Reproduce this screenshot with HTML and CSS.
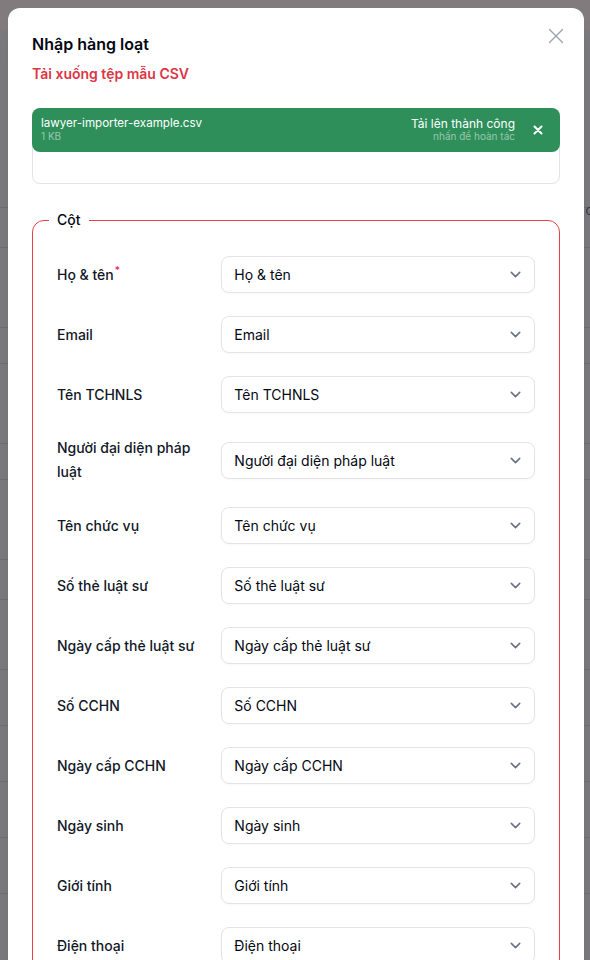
FILE: index.html
```html
<!DOCTYPE html>
<html lang="vi">
<head>
<meta charset="utf-8">
<title>Nhập hàng loạt</title>
<link rel="stylesheet" href="styles.css">
</head>
<body>
<div class="page">
  <div class="page-top"></div>
  <div class="bg-row h178"><span class="bg-text">c</span></div>
  <div class="bg-row h40"></div>
  <div class="bg-row h80"></div>
  <div class="bg-row h36"></div>
  <div class="bg-row h80"></div>
  <div class="bg-row h36"></div>
  <div class="bg-row h80"></div>
  <div class="bg-row h40"></div>
  <div class="bg-row h70"></div>
  <div class="bg-row h56"></div>
  <div class="bg-row h56"></div>
  <div class="bg-row h56"></div>
  <div class="bg-row h56"></div>
</div>

<div class="overlay">
  <div class="modal">
    <button class="close" type="button" aria-label="Đóng">
      <svg width="16" height="16" viewBox="0 0 16 16" fill="none" stroke="#9ca3af" stroke-width="1.4" stroke-linecap="round"><path d="M1.5 1.5l13 13M14.5 1.5l-13 13"/></svg>
    </button>
    <h2 class="title">Nhập hàng loạt</h2>
    <a class="download" href="#">Tải xuống tệp mẫu CSV</a>

    <div class="upload">
      <div class="file-item">
        <div class="file-info">
          <span class="file-name">lawyer-importer-example.csv</span>
          <span class="file-size">1 KB</span>
        </div>
        <div class="file-status">
          <span class="status-main">Tải lên thành công</span>
          <span class="status-sub">nhấn để hoàn tác</span>
        </div>
        <button class="file-remove" type="button" aria-label="Hoàn tác">
          <svg width="10" height="10" viewBox="0 0 10 10" fill="none" stroke="#fff" stroke-width="2" stroke-linecap="round"><path d="M1.5 1.5l7 7M8.5 1.5l-7 7"/></svg>
        </button>
      </div>
    </div>

    <fieldset class="columns">
      <legend>Cột</legend>
      <div class="rows">
        <div class="row"><div class="label">Họ &amp; tên<sup class="req">*</sup></div><div class="select"><span>Họ &amp; tên</span><svg class="chev" width="21" height="21" viewBox="0 0 20 20" fill="none" stroke="#6b7280" stroke-width="1.5" stroke-linecap="round" stroke-linejoin="round"><path d="M6 8l4 4 4-4"/></svg></div></div>
        <div class="row"><div class="label">Email</div><div class="select"><span>Email</span><svg class="chev" width="21" height="21" viewBox="0 0 20 20" fill="none" stroke="#6b7280" stroke-width="1.5" stroke-linecap="round" stroke-linejoin="round"><path d="M6 8l4 4 4-4"/></svg></div></div>
        <div class="row"><div class="label">Tên TCHNLS</div><div class="select"><span>Tên TCHNLS</span><svg class="chev" width="21" height="21" viewBox="0 0 20 20" fill="none" stroke="#6b7280" stroke-width="1.5" stroke-linecap="round" stroke-linejoin="round"><path d="M6 8l4 4 4-4"/></svg></div></div>
        <div class="row"><div class="label">Người đại diện pháp luật</div><div class="select"><span>Người đại diện pháp luật</span><svg class="chev" width="21" height="21" viewBox="0 0 20 20" fill="none" stroke="#6b7280" stroke-width="1.5" stroke-linecap="round" stroke-linejoin="round"><path d="M6 8l4 4 4-4"/></svg></div></div>
        <div class="row"><div class="label">Tên chức vụ</div><div class="select"><span>Tên chức vụ</span><svg class="chev" width="21" height="21" viewBox="0 0 20 20" fill="none" stroke="#6b7280" stroke-width="1.5" stroke-linecap="round" stroke-linejoin="round"><path d="M6 8l4 4 4-4"/></svg></div></div>
        <div class="row"><div class="label">Số thẻ luật sư</div><div class="select"><span>Số thẻ luật sư</span><svg class="chev" width="21" height="21" viewBox="0 0 20 20" fill="none" stroke="#6b7280" stroke-width="1.5" stroke-linecap="round" stroke-linejoin="round"><path d="M6 8l4 4 4-4"/></svg></div></div>
        <div class="row"><div class="label">Ngày cấp thẻ luật sư</div><div class="select"><span>Ngày cấp thẻ luật sư</span><svg class="chev" width="21" height="21" viewBox="0 0 20 20" fill="none" stroke="#6b7280" stroke-width="1.5" stroke-linecap="round" stroke-linejoin="round"><path d="M6 8l4 4 4-4"/></svg></div></div>
        <div class="row"><div class="label">Số CCHN</div><div class="select"><span>Số CCHN</span><svg class="chev" width="21" height="21" viewBox="0 0 20 20" fill="none" stroke="#6b7280" stroke-width="1.5" stroke-linecap="round" stroke-linejoin="round"><path d="M6 8l4 4 4-4"/></svg></div></div>
        <div class="row"><div class="label">Ngày cấp CCHN</div><div class="select"><span>Ngày cấp CCHN</span><svg class="chev" width="21" height="21" viewBox="0 0 20 20" fill="none" stroke="#6b7280" stroke-width="1.5" stroke-linecap="round" stroke-linejoin="round"><path d="M6 8l4 4 4-4"/></svg></div></div>
        <div class="row"><div class="label">Ngày sinh</div><div class="select"><span>Ngày sinh</span><svg class="chev" width="21" height="21" viewBox="0 0 20 20" fill="none" stroke="#6b7280" stroke-width="1.5" stroke-linecap="round" stroke-linejoin="round"><path d="M6 8l4 4 4-4"/></svg></div></div>
        <div class="row"><div class="label">Giới tính</div><div class="select"><span>Giới tính</span><svg class="chev" width="21" height="21" viewBox="0 0 20 20" fill="none" stroke="#6b7280" stroke-width="1.5" stroke-linecap="round" stroke-linejoin="round"><path d="M6 8l4 4 4-4"/></svg></div></div>
        <div class="row"><div class="label">Điện thoại</div><div class="select"><span>Điện thoại</span><svg class="chev" width="21" height="21" viewBox="0 0 20 20" fill="none" stroke="#6b7280" stroke-width="1.5" stroke-linecap="round" stroke-linejoin="round"><path d="M6 8l4 4 4-4"/></svg></div></div>
        <div class="row"><div class="label">Địa chỉ</div><div class="select"><span>Địa chỉ</span><svg class="chev" width="21" height="21" viewBox="0 0 20 20" fill="none" stroke="#6b7280" stroke-width="1.5" stroke-linecap="round" stroke-linejoin="round"><path d="M6 8l4 4 4-4"/></svg></div></div>
      </div>
    </fieldset>
  </div>
</div>
</body>
</html>
```

FILE: styles.css
```css
* { box-sizing: border-box; }

html, body {
  margin: 0;
  height: 960px;
  overflow: hidden;
}

body {
  position: relative;
  background: #7b7a7f;
  font-family: Inter, "Noto Sans", "Liberation Sans", sans-serif;
  color: #030712;
}

/* page behind the overlay */
.page {
  display: flex;
  flex-direction: column;
}
.page-top {
  height: 30px;
  background: #817b7e;
}
.bg-row {
  border-bottom: 1px solid #706f74;
  position: relative;
}
.h178 { height: 178px; }
.h40 { height: 40px; }
.h80 { height: 80px; }
.h36 { height: 36px; }
.h70 { height: 70px; }
.h56 { height: 56px; }
.bg-text {
  position: absolute;
  right: -3px;
  top: 172px;
  font-size: 13px;
  color: #3a3a40;
}

/* overlay + modal */
.overlay {
  position: absolute;
  inset: 0;
  padding: 8px;
}

.modal {
  position: relative;
  width: 576px;
  background: #fff;
  border-radius: 12px;
  padding: 24px;
  box-shadow: 0 20px 25px -5px rgba(0,0,0,.1), 0 8px 10px -6px rgba(0,0,0,.1);
}

.close {
  position: absolute;
  top: 10px;
  right: 10px;
  width: 36px;
  height: 36px;
  border: 0;
  background: transparent;
  padding: 0;
  display: flex;
  align-items: center;
  justify-content: center;
}

.title {
  margin: 0;
  font-size: 16px;
  line-height: 24px;
  font-weight: 600;
  color: #030712;
}

.download {
  display: block;
  margin-top: 8px;
  font-size: 14px;
  line-height: 20px;
  font-weight: 600;
  color: #dc3545;
  text-decoration: none;
}

/* upload box */
.upload {
  margin-top: 24px;
  height: 76px;
  border: 1px solid #e3e4e7;
  border-radius: 8px;
  background: #fff;
}

.file-item {
  margin: -1px -1px 0;
  height: 44px;
  background: #2e8f5a;
  border-radius: 8px;
  display: flex;
  align-items: center;
  padding: 0 9px;
  color: #fff;
}

.file-info {
  flex: 1;
  display: flex;
  flex-direction: column;
}
.file-name {
  font-size: 11.6px;
  line-height: 13.5px;
}
.file-size {
  font-size: 10px;
  line-height: 13.5px;
  color: rgba(255,255,255,.5);
}

.file-status {
  display: flex;
  flex-direction: column;
  align-items: flex-end;
}
.status-main {
  font-size: 12px;
  line-height: 13.5px;
}
.status-sub {
  font-size: 10px;
  line-height: 13.5px;
  color: rgba(255,255,255,.5);
}

.file-remove {
  margin-left: 10px;
  width: 26px;
  height: 26px;
  border-radius: 50%;
  border: 0;
  padding: 0;
  background: transparent;
  display: flex;
  align-items: center;
  justify-content: center;
}

/* fieldset */
.columns {
  margin: 24px 0 0;
  border: 1px solid #ea3f4a;
  border-radius: 12px;
  padding: 24px;
}
.columns legend {
  margin-left: -8px;
  padding: 0 8px;
  font-size: 14px;
  line-height: 24px;
  font-weight: 500;
  color: #030712;
}

.rows {
  display: flex;
  flex-direction: column;
  gap: 23px;
}

.row {
  display: grid;
  grid-template-columns: repeat(3, minmax(0, 1fr));
  column-gap: 15px;
  align-items: center;
}

.label {
  font-size: 14px;
  line-height: 24px;
  font-weight: 500;
  color: #111827;
}
.req {
  color: #e11d48;
  font-weight: 500;
  font-size: 10px;
  margin-left: 1px;
  vertical-align: 6px;
  line-height: 0;
}

.select {
  grid-column: span 2;
  height: 37px;
  border: 1px solid #e3e4e7;
  border-radius: 8px;
  display: flex;
  align-items: center;
  justify-content: space-between;
  padding: 0 8px 0 12px;
  font-size: 14px;
  color: #030712;
  background: #fff;
  box-shadow: 0 1px 2px rgba(0,0,0,.03);
}
.chev { flex: none; }
```
